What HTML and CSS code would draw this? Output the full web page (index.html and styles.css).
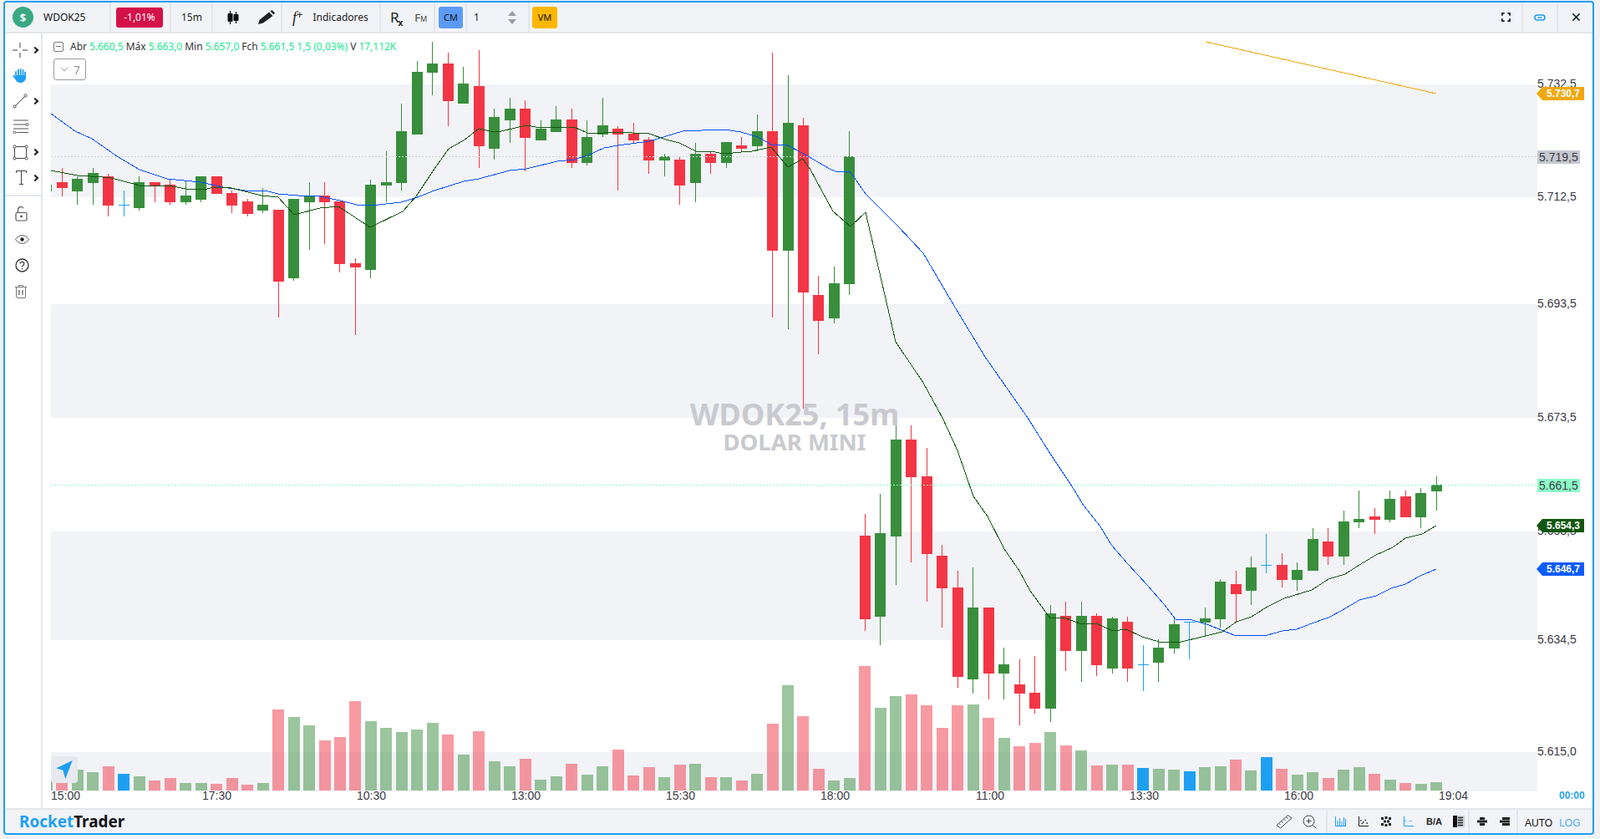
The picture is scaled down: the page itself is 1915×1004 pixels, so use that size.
FILE: index.html
```html
<!DOCTYPE html>
<html lang="pt-BR">
    <head>
        <meta charset="UTF-8" />
        <meta name="viewport" content="width=device-width, initial-scale=1.0" />
        <title>WDOK25, 15m - RocketTrader</title>
        <link rel="stylesheet" href="styles.css">
    </head>

    <body>
        <div class="app">
            <!-- top bar -->
            <header class="topbar">
                <div class="group group--symbol">
                    <span class="coin">$</span>
                    <span class="symbol">WDOK25</span>
                </div>
                <div class="group group--change"><span class="change">-1,01%</span></div>
                <div class="group group--period">15m</div>
                <div class="group group--draw">
                    <svg class="icon" width="14" height="16" viewBox="0 0 14 16">
                        <path d="M3.500 0v16M10.500 1v14" stroke="#111" stroke-width="1.200" />
                        <rect x="0.500" y="3" width="6" height="10" rx="1" fill="#111" />
                        <rect x="7.500" y="4" width="6" height="8" rx="1" fill="#111" />
                    </svg>
                    <svg class="icon" width="20" height="17" viewBox="0 0 20 17">
                        <path d="M0 17l1.500-5L13 2.500 17.500 7 6 15.500z" fill="#222" />
                        <path d="M14.500 1.500L16.500 0 20 3.500 18.500 5.500z" fill="#222" />
                    </svg>
                </div>
                <div class="group group--indicators">
                    <span class="fx">f<sup>+</sup></span>
                    <span>Indicadores</span>
                </div>
                <div class="group group--tools">
                    <span class="rx">R<sub>x</sub></span>
                    <span class="fm">F<small>M</small></span>
                </div>
                <div class="group group--cm"><span class="square square--blue">CM</span></div>
                <div class="group group--qty">
                    <span>1</span>
                    <span class="spinner"><i class="spinner__up"></i><i class="spinner__down"></i></span>
                </div>
                <div class="group group--vm"><span class="square square--yellow">VM</span></div>

                <div class="topbar__right">
                    <div class="group group--fullscreen">
                        <svg width="11" height="11" viewBox="0 0 12 12" fill="none" stroke="#14202c" stroke-width="2">
                            <path d="M1 4V1h3M8 1h3v3M11 8v3H8M4 11H1V8" />
                        </svg>
                    </div>
                    <div class="group group--icon">
                        <svg width="14" height="10" viewBox="0 0 14 10" fill="none" stroke="#1e9ff2" stroke-width="1.600">
                            <rect x="1" y="2" width="12" height="6" rx="3" />
                            <path d="M4.500 5h5" />
                        </svg>
                    </div>
                    <div class="group group--close">
                        <svg width="11" height="11" viewBox="0 0 12 12" stroke="#14202c" stroke-width="1.600">
                            <path d="M1.500 1.500l9 9M10.500 1.500l-9 9" />
                        </svg>
                    </div>
                </div>
            </header>

            <div class="main">
                <!-- drawing tools -->
                <nav class="toolbar">
                    <div class="tools">
                        <div class="tool tool--more">
                            <svg width="18" height="18" viewBox="0 0 18 18" stroke="#444">
                                <path d="M0 9h6M12 9h6M9 0v6M9 12v6" />
                            </svg>
                        </div>
                        <div class="tool">
                            <svg width="16" height="17" viewBox="0 0 16 17" fill="#1e9ff2">
                                <rect x="3.200" y="3" width="1.800" height="8" rx="0.900" />
                                <rect x="6" y="0.500" width="1.800" height="9" rx="0.900" />
                                <rect x="8.800" y="0" width="1.800" height="9" rx="0.900" />
                                <rect x="11.600" y="1" width="1.800" height="9" rx="0.900" />
                                <rect x="14.200" y="3.500" width="1.800" height="7" rx="0.900" />
                                <path d="M3.200 8h12.800v2.500c0 4-3 6.500-6.500 6.500-3.200 0-4.800-1.500-6-3.800L0 8.500c.8-.9 2-.6 2.600.2l.6 1z" />
                            </svg>
                        </div>
                        <div class="tool tool--more">
                            <svg width="18" height="18" viewBox="0 0 18 18" fill="#fff" stroke="#444">
                                <path d="M3 15L15 3" />
                                <circle cx="2.500" cy="15.500" r="1.600" />
                                <circle cx="15.500" cy="2.500" r="1.600" />
                            </svg>
                        </div>
                        <div class="tool">
                            <svg width="20" height="17" viewBox="0 0 20 17" fill="#fff" stroke="#555">
                                <path d="M1 1h18M1 6h15M1 11h18M5 15.500h14" stroke-width="1.200" />
                                <circle cx="17.500" cy="6" r="1.500" />
                                <circle cx="2.500" cy="15.500" r="1.500" />
                            </svg>
                        </div>
                        <div class="tool tool--more">
                            <svg width="19" height="19" viewBox="0 0 19 19" fill="#fff" stroke="#444">
                                <rect x="2.500" y="2.500" width="14" height="14" />
                                <circle cx="2.500" cy="2.500" r="1.600" />
                                <circle cx="16.500" cy="2.500" r="1.600" />
                                <circle cx="2.500" cy="16.500" r="1.600" />
                                <circle cx="16.500" cy="16.500" r="1.600" />
                            </svg>
                        </div>
                        <div class="tool tool--more tool--text">
                            <svg width="13" height="17" viewBox="0 0 13 17" fill="none" stroke="#444">
                                <path d="M0.500 3V0.500h12V3M6.500 0.500v16M4 16.500h5" />
                            </svg>
                        </div>
                    </div>
                    <div class="tools tools--lower">
                        <div class="tool">
                            <svg width="15" height="18" viewBox="0 0 15 18" fill="none" stroke="#555" stroke-width="1.200">
                                <rect x="1" y="7.500" width="13" height="9.500" rx="1.500" />
                                <path d="M3.500 7.500V4a3.500 3.500 0 0 1 6.500-1.800" />
                                <circle cx="7.500" cy="12" r="0.800" fill="#333" />
                            </svg>
                        </div>
                        <div class="tool">
                            <svg width="17" height="11" viewBox="0 0 17 11" fill="none" stroke="#555">
                                <path d="M0.500 5.500C3 2 5.500 0.700 8.500 0.700S14 2 16.500 5.500C14 9 11.500 10.300 8.500 10.300S3 9 0.500 5.500z" />
                                <circle cx="8.500" cy="5.500" r="2.200" fill="#222" stroke="none" />
                            </svg>
                        </div>
                        <div class="tool">
                            <svg width="17" height="17" viewBox="0 0 17 17" fill="none" stroke="#333" stroke-width="1.300">
                                <circle cx="8.500" cy="8.500" r="7.500" />
                                <path d="M6.200 6.500a2.300 2.300 0 1 1 3.500 2c-.9.500-1.200 1-1.200 2" />
                                <path d="M8.500 12v1.300" />
                            </svg>
                        </div>
                        <div class="tool">
                            <svg width="14" height="16" viewBox="0 0 14 16" fill="none" stroke="#777">
                                <path d="M0 2.500h14M4.500 2.500V0.500h5v2M1.500 2.500V14a1.500 1.500 0 0 0 1.500 1.500h8a1.500 1.500 0 0 0 1.500-1.500V2.500" />
                                <path d="M5 6v6M9 6v6" stroke-width="1.500" />
                            </svg>
                        </div>
                    </div>
                </nav>

                <!-- chart, filled in by chart.js -->
                <section class="chart" id="chart">
                    <div class="legend">
                        <div class="legend__row">
                            <span class="legend__toggle"></span>
                            <span>Abr <b>5.660,5</b> Máx <b>5.663,0</b> Min <b>5.657,0</b> Fch <b>5.661,5 1,5 (0,03%)</b> V <b>17,112K</b></span>
                        </div>
                        <div class="legend__collapsed">
                            <svg width="10" height="6" viewBox="0 0 10 6" fill="none" stroke="#999"><path d="M1 1l4 4 4-4" /></svg>
                            <span>7</span>
                        </div>
                    </div>
                    <div class="nav-button">
                        <svg width="32" height="32" viewBox="0 0 32 32">
                            <path d="M25.700 5L6.300 14.300l8 2.400L17.300 27z" fill="#1e9ff2" />
                        </svg>
                    </div>
                </section>
            </div>

            <!-- bottom bar -->
            <footer class="bottombar">
                <div class="brand"><span class="brand__rocket">Rocket</span>Trader</div>
                <div class="bottombar__right">
                    <div class="bgroup bgroup--measure">
                        <svg width="20" height="18" viewBox="0 0 20 18" fill="none" stroke="#444">
                            <path d="M1 13.500L14.500 1.500l4.500 3.500L5.500 17z" />
                            <path d="M4 11.500l1.500 1.500M7 9l1.500 1.500M10 6.500l1.500 1.500M13 4l1.500 1.500" />
                        </svg>
                        <svg width="17" height="17" viewBox="0 0 17 17" fill="none" stroke="#444">
                            <circle cx="7.500" cy="7.500" r="6.500" />
                            <path d="M4.500 7.500h6M7.500 4.500v6M12.500 12.500l4 4" />
                        </svg>
                    </div>
                    <div class="bgroup bgroup--view">
                        <svg width="13" height="12" viewBox="0 0 13 12" stroke="#1e9ff2">
                            <path d="M0.500 0v11.500H13M3 5v6M5.500 2v9M8 6v5M10.500 1v10M12.500 3v8" fill="none" />
                        </svg>
                        <svg width="12" height="12" viewBox="0 0 12 12" stroke="#222">
                            <path d="M0.500 0v11.500H12" fill="none" />
                            <path d="M2 5h1.500M5 7h1.500M7.500 4.500H9M9.500 8H11M3.500 8.500H5" stroke-width="1.500" />
                        </svg>
                        <svg width="12" height="12" viewBox="0 0 12 12" fill="#222">
                            <rect x="0" y="1" width="3" height="3" /><rect x="4.500" y="0" width="3" height="3" /><rect x="9" y="1" width="3" height="3" />
                            <rect x="3" y="4.500" width="3" height="3" /><rect x="7" y="4.500" width="3" height="3" />
                            <rect x="0" y="8" width="3" height="3" /><rect x="4.500" y="9" width="3" height="3" /><rect x="9" y="8" width="3" height="3" />
                        </svg>
                        <svg width="12" height="12" viewBox="0 0 12 12" fill="none" stroke="#1e9ff2">
                            <path d="M0.500 0v11.500H12" /><path d="M0.500 5.500H4M6 5.500h4" stroke-opacity="0.600" />
                        </svg>
                        <span class="ba">B/A</span>
                        <span class="book">
                            <svg width="14" height="14" viewBox="0 0 14 14">
                                <rect x="0" y="0" width="14" height="14" fill="#cfd2d8" />
                                <rect x="0" y="0" width="5" height="14" fill="#111" />
                                <path d="M6 2.500h6M6 5.500h6M6 8.500h6M6 11.500h6" stroke="#222" stroke-width="1.300" />
                            </svg>
                        </span>
                    </div>
                    <div class="bgroup bgroup--layout">
                        <svg width="12" height="10" viewBox="0 0 12 10" fill="#222">
                            <rect x="3" y="0" width="6" height="3" /><rect x="0" y="3.500" width="12" height="3" /><rect x="3" y="7" width="6" height="3" />
                        </svg>
                        <svg width="12" height="10" viewBox="0 0 12 10" fill="#222">
                            <rect x="3" y="0" width="9" height="3" /><rect x="0" y="3.500" width="12" height="3" /><rect x="3" y="7" width="9" height="3" />
                        </svg>
                    </div>
                    <div class="bgroup bgroup--scale">
                        <span>AUTO</span>
                        <span class="scale-log">LOG</span>
                    </div>
                </div>
            </footer>
        </div>

        <script src="chart.js"></script>
    </body>
</html>
```

FILE: styles.css
```css
html {
    box-sizing: border-box;
    font-size: 16px;
}

*,
*:before,
*:after {
    box-sizing: inherit;
}

body {
    margin: 0;
    padding: 1px 0 0 4px;
    height: 1004px;
    overflow: hidden;
    background: #f1f1f1;
    font-family: "Noto Sans", sans-serif;
    color: #222;
}

.app {
    display: flex;
    flex-direction: column;
    width: 1904px;
    height: 998px;
    border: 2px solid #1e9ff2;
    border-radius: 4px;
    background: #f1f3f7;
    overflow: hidden;
}

/* top bar */
.topbar {
    display: flex;
    flex: none;
    height: 37px;
    border-bottom: 2px solid #e3e6ea;
    font-size: 12px;
}

.group {
    display: flex;
    flex: none;
    align-items: center;
    height: 35px;
    border-right: 2px solid #e3e6ea;
}

.group--symbol { width: 127px; padding-left: 9px; }
.group--change { width: 72px; padding-left: 6px; }
.group--period { width: 50px; padding-left: 12px; }
.group--draw { width: 83px; padding-left: 17px; gap: 23px; }
.group--indicators { width: 118px; padding-left: 12px; gap: 12px; }
.group--tools { width: 65px; padding-left: 11px; gap: 14px; }
.group--cm { width: 38px; padding-left: 4px; }
.group--qty { width: 75px; padding-left: 8px; gap: 34px; }
.group--vm { width: 40px; padding-left: 3px; border-right: 0; }

.topbar__right {
    display: flex;
    margin-left: auto;
}

.group--fullscreen { width: 40px; padding-left: 14px; }
.group--icon { width: 42px; justify-content: center; }
.group--close { width: 41px; padding-left: 16px; border-right: 0; }

.coin {
    display: flex;
    align-items: center;
    justify-content: center;
    width: 25px;
    height: 25px;
    border-radius: 50%;
    background: #3aa981;
    color: #fff;
    font-size: 13px;
    font-weight: 700;
}

.symbol {
    margin-left: 12px;
    color: #111;
}

.change {
    width: 56px;
    border-radius: 3px;
    background: #d41149;
    color: #fff;
    line-height: 24px;
    text-align: center;
}

.fx {
    font-family: "Liberation Serif", serif;
    font-size: 18px;
    font-style: italic;
    line-height: 18px;
}

.fx sup {
    font-family: "Noto Sans", sans-serif;
    font-size: 13px;
    font-style: normal;
    line-height: 0;
    vertical-align: 5px;
}

.rx {
    font-size: 17px;
    line-height: 18px;
}

.rx sub {
    margin-left: -1px;
    font-size: 10px;
    font-weight: 700;
    line-height: 0;
}

.fm {
    color: #444;
    font-size: 13px;
}

.fm small {
    font-size: 9px;
}

.square {
    display: flex;
    align-items: center;
    justify-content: center;
    width: 29px;
    height: 26px;
    border-radius: 3px;
    font-size: 11px;
    color: #111;
}

.square--blue { background: #5b9bf8; }
.square--yellow { width: 30px; background: #fdb700; }

.spinner {
    display: flex;
    flex-direction: column;
    gap: 4px;
}

.spinner i {
    display: block;
    width: 0;
    height: 0;
    border-left: 5.5px solid transparent;
    border-right: 5.5px solid transparent;
}

.spinner__up { border-bottom: 6px solid #9b9ba5; }
.spinner__down { border-top: 6px solid #9b9ba5; }

/* middle */
.main {
    display: flex;
    flex: 1;
    min-height: 0;
}

.toolbar {
    flex: none;
    width: 45px;
    border-right: 2px solid #e3e6ea;
    background: #fff;
}

.tools {
    padding: 5px 0;
    border-bottom: 2px solid #e3e6ea;
}

.tools--lower {
    padding-top: 5px;
    border-bottom: 0;
}

.tool {
    position: relative;
    display: flex;
    align-items: center;
    height: 30.5px;
    padding-left: 9px;
}

.tools--lower .tool {
    height: 31px;
    padding-left: 12px;
}

.tool--text {
    padding-left: 13px;
}

.tool--more:after {
    content: "";
    position: absolute;
    left: 33px;
    top: 12px;
    width: 6px;
    height: 6px;
    border-top: 2px solid #222;
    border-right: 2px solid #222;
    transform: rotate(45deg);
}

.chart {
    position: relative;
    flex: 1;
    min-width: 0;
    background: #fff;
}

.chart svg.chart__canvas {
    display: block;
}

.legend {
    position: absolute;
    left: 13px;
    top: 8px;
    font-size: 12px;
    letter-spacing: -0.03px;
    color: #333;
}

.legend__row {
    display: flex;
    align-items: center;
    gap: 8px;
    line-height: 16px;
}

.legend b {
    font-weight: 400;
    color: #1ce88f;
}

.legend__toggle {
    position: relative;
    width: 12px;
    height: 12px;
    border: 1px solid #777;
    border-radius: 2px;
}

.legend__toggle:after {
    content: "";
    position: absolute;
    left: 2px;
    top: 4px;
    width: 6px;
    height: 1px;
    background: #777;
}

.legend__collapsed {
    display: flex;
    align-items: center;
    gap: 6px;
    width: 39px;
    height: 26px;
    margin-top: 6px;
    padding-left: 7px;
    border: 1px solid #9a9aa5;
    border-radius: 3px;
    color: #999;
    font-size: 14px;
}

.nav-button {
    position: absolute;
    left: 10px;
    top: 865px;
    width: 32px;
    height: 32px;
    border-radius: 4px;
    background: #e7e9ee;
}

.nav-button svg {
    display: block;
}

/* chart pieces, the svg is built in chart.js */
.band { fill: #f2f3f7; }
.bar--g { fill: #388e3c; fill-opacity: 0.5; }
.bar--r { fill: #f23645; fill-opacity: 0.5; }
.bar--b { fill: #1e9ff2; }
.candle--g { fill: #388e3c; }
.candle--r { fill: #f23645; }
.candle--b { fill: #1e9ff2; }

.ma {
    fill: none;
    stroke-width: 1;
    shape-rendering: crispEdges;
}

.ma--green { stroke: #11570f; }
.ma--blue { stroke: #0050ff; }
.ma--orange { stroke: #f0a70f; }

.hline {
    stroke-width: 1;
    stroke-dasharray: 2 2;
    shape-rendering: crispEdges;
}

.hline--grey { stroke: #d0d2d8; }
.hline--green { stroke: #8effc8; }

.axis-text {
    font-family: "Liberation Sans", sans-serif;
    font-size: 14px;
    fill: #3a3a45;
}

.axis-now {
    font-family: "Liberation Sans", sans-serif;
    font-size: 12px;
    font-weight: 700;
    fill: #2aa5f5;
}

.tag-text {
    font-family: "Liberation Sans", sans-serif;
    font-size: 12px;
    font-weight: 700;
    fill: #fff;
}

.watermark {
    font-family: "Noto Sans", sans-serif;
    font-weight: 700;
    fill: #c9cacf;
    text-anchor: middle;
}

.watermark--big { font-size: 36px; }
.watermark--small { font-size: 27.5px; }

/* bottom bar */
.bottombar {
    display: flex;
    flex: none;
    align-items: center;
    height: 30px;
    border-top: 2px solid #e3e6ea;
}

.brand {
    margin-left: 17px;
    font-size: 18.9px;
    font-weight: 700;
    color: #14161c;
}

.brand__rocket { color: #1e9ff2; }

.bottombar__right {
    display: flex;
    margin-left: auto;
    height: 100%;
}

.bgroup {
    display: flex;
    align-items: center;
    height: 100%;
    border-left: 2px solid #e3e6ea;
}

.bgroup--measure {
    border-left: 0;
    gap: 12px;
    padding-right: 11px;
}

.bgroup--view {
    gap: 15px;
    width: 170px;
    padding-left: 9px;
}

.bgroup--view .ba {
    margin-right: -2px;
}

.bgroup--layout {
    gap: 15px;
    width: 58px;
    padding-left: 9px;
}

.bgroup--scale {
    gap: 8px;
    width: 91px;
    padding: 3px 0 0 8px;
    font-family: "Liberation Sans", sans-serif;
    font-size: 12px;
    color: #111;
}

.ba {
    font-family: "Liberation Sans", sans-serif;
    font-size: 11px;
    font-weight: 700;
}

.book {
    display: flex;
}

.scale-log { color: #4da9f5; }
```

FILE: chart.js
```js
// candle: [colour, wick top, body top, body bottom, wick bottom], y in page pixels
const candles = [
    ["g", 221, 221, 229, 229], ["r", 201, 218, 225, 235], ["g", 211, 214, 229, 245], ["g", 201, 207, 219, 245],
    ["r", 208, 211, 246, 259], ["b", 228, 245, 246, 259], ["g", 211, 218, 249, 252], ["r", 218, 218, 222, 242],
    ["r", 215, 221, 242, 245], ["g", 217, 234, 242, 245], ["g", 211, 211, 239, 242], ["r", 211, 211, 232, 232],
    ["r", 228, 231, 246, 255], ["r", 238, 241, 256, 259], ["g", 225, 245, 252, 255], ["r", 251, 251, 337, 380],
    ["g", 238, 238, 333, 336], ["g", 218, 234, 242, 299], ["r", 218, 234, 242, 292], ["r", 241, 241, 316, 326],
    ["r", 309, 315, 320, 401], ["g", 215, 221, 323, 333], ["g", 181, 218, 222, 242], ["g", 124, 157, 219, 228],
    ["g", 73, 86, 161, 161], ["g", 50, 76, 87, 114], ["r", 63, 76, 121, 151], ["g", 80, 100, 124, 124],
    ["r", 60, 103, 175, 201], ["g", 130, 140, 178, 191], ["g", 117, 130, 144, 171], ["r", 120, 130, 165, 205],
    ["g", 144, 154, 168, 168], ["g", 127, 143, 158, 158], ["r", 130, 143, 195, 201], ["g", 144, 164, 195, 198],
    ["g", 117, 150, 161, 164], ["r", 151, 154, 161, 228], ["r", 147, 160, 168, 171], ["r", 164, 167, 192, 208],
    ["g", 184, 187, 192, 211], ["r", 188, 191, 222, 245], ["g", 171, 184, 219, 242], ["r", 182, 184, 195, 208],
    ["g", 170, 170, 195, 201], ["r", 164, 174, 178, 181], ["g", 137, 157, 175, 181], ["r", 63, 157, 300, 380],
    ["g", 90, 147, 300, 394], ["r", 141, 150, 350, 489], ["r", 330, 353, 384, 424], ["g", 319, 339, 381, 387],
    ["g", 157, 187, 340, 353], ["r", 615, 641, 741, 755], ["g", 591, 638, 738, 772], ["g", 509, 526, 642, 700],
    ["r", 509, 526, 571, 673], ["r", 536, 570, 663, 720], ["r", 652, 665, 704, 751], ["r", 683, 703, 810, 823],
    ["g", 679, 727, 813, 830], ["r", 727, 727, 806, 837], ["g", 775, 795, 806, 837], ["r", 789, 819, 830, 868],
    ["r", 785, 829, 848, 854], ["g", 724, 734, 848, 864], ["r", 720, 737, 779, 803], ["g", 720, 737, 779, 816],
    ["r", 734, 737, 796, 809], ["g", 738, 740, 800, 806], ["r", 738, 744, 800, 816], ["b", 772, 795, 796, 827],
    ["g", 765, 775, 793, 816], ["g", 738, 747, 776, 782], ["b", 744, 744, 745, 789], ["g", 727, 740, 745, 761],
    ["g", 693, 696, 741, 751], ["r", 683, 699, 711, 744], ["g", 666, 679, 707, 724], ["b", 639, 676, 677, 686],
    ["r", 662, 676, 694, 703], ["g", 673, 682, 694, 707], ["g", 632, 645, 683, 683], ["r", 632, 648, 666, 676],
    ["g", 611, 624, 666, 676], ["g", 587, 621, 625, 632], ["r", 608, 618, 622, 639], ["g", 587, 597, 622, 625],
    ["r", 587, 594, 619, 619], ["g", 584, 590, 619, 632], ["g", 570, 580, 588, 611]
];

// volume: [colour, bar top]
const volumes = [
    ["g", 931], ["r", 925], ["g", 921], ["g", 924], ["r", 917], ["b", 926], ["g", 929], ["r", 934], ["r", 931],
    ["g", 937], ["g", 937], ["r", 938], ["r", 931], ["r", 939], ["g", 937], ["r", 849], ["g", 858], ["g", 868],
    ["r", 886], ["r", 882], ["r", 839], ["g", 863], ["g", 871], ["g", 876], ["g", 873], ["g", 865], ["r", 879],
    ["g", 903], ["r", 875], ["g", 911], ["g", 917], ["r", 908], ["g", 933], ["g", 929], ["r", 914], ["g", 927],
    ["g", 917], ["r", 897], ["r", 928], ["r", 918], ["g", 930], ["r", 915], ["g", 914], ["r", 930], ["g", 930],
    ["r", 934], ["g", 926], ["r", 866], ["g", 820], ["r", 857], ["r", 920], ["g", 934], ["g", 931], ["r", 797],
    ["g", 847], ["g", 833], ["r", 831], ["r", 844], ["r", 871], ["r", 844], ["g", 843], ["r", 859], ["g", 883],
    ["r", 893], ["r", 889], ["g", 876], ["r", 892], ["g", 898], ["r", 916], ["g", 915], ["r", 915], ["b", 919],
    ["g", 920], ["g", 921], ["b", 923], ["g", 918], ["g", 917], ["r", 909], ["g", 922], ["b", 906], ["r", 920],
    ["g", 927], ["g", 924], ["r", 931], ["g", 921], ["g", 918], ["r", 926], ["g", 933], ["r", 937], ["g", 938],
    ["g", 936]
];

const maBlue = "61,136 90,157 110,166 140,187 167,203 200,214 240,218 267,224 293,228 317,228 333,232 357,234 383,235 407,240 427,245 453,245 480,242 497,237 520,228 555,217 573,214 610,204 630,202 667,193 687,191 703,186 723,177 740,174 777,169 797,163 817,157 840,156 867,155 887,158 907,164 923,173 943,174 960,183 993,202 1000,205 1017,205 1020,209 1036,232 1075,271 1105,303 1142,366 1179,427 1230,500 1257,543 1283,582 1297,605 1317,630 1330,652 1350,675 1373,700 1393,723 1407,741 1427,742 1447,748 1477,760 1483,761 1517,760 1535,755 1552,753 1570,746 1590,739 1607,730 1627,718 1647,713 1665,704 1682,699 1700,689 1719,681";
const maGreen = "61,204 93,210 123,212 133,213 160,220 167,222 200,222 223,226 243,227 257,224 277,225 293,229 313,234 333,236 352,257 383,249 405,247 443,272 482,253 498,235 520,202 537,178 555,168 573,154 587,157 600,157 630,150 647,153 680,152 687,152 703,159 710,160 737,158 777,160 797,167 813,171 833,181 850,181 867,184 887,182 900,181 923,176 943,200 961,190 970,203 997,253 1018,271 1036,254 1072,409 1105,458 1128,500 1146,539 1165,594 1182,618 1202,657 1220,683 1233,707 1257,740 1273,739 1295,747 1312,746 1332,755 1348,753 1367,762 1387,768 1410,769 1443,761 1463,756 1480,744 1498,738 1517,726 1537,716 1570,706 1590,693 1610,687 1627,676 1647,664 1667,655 1682,644 1702,639 1719,629";

const bands = [[101, 236], [364, 500], [636, 766], [900, 947]];

const times = [
    ["15:00", 61], ["17:30", 242], ["10:30", 427], ["13:00", 612], ["15:30", 797],
    ["18:00", 982], ["11:00", 1168], ["13:30", 1352], ["16:00", 1537], ["19:04", 1722]
];

const prices = [
    ["5.732,5", 105], ["5.712,5", 240], ["5.693,5", 368], ["5.673,5", 504],
    ["5.653,5", 640], ["5.634,5", 770], ["5.615,0", 904]
];

// price marks with a box: [text, top, colour]
const priceBoxes = [["5.719,5", 180, "#c5c8d0"], ["5.661,5", 573, "#8effc8"]];

// arrow tags on the axis: [text, top, colour]
const priceTags = [["5.730,7", 104, "#f0a70f"], ["5.654,3", 621, "#11570f"], ["5.646,7", 673, "#0b5cff"]];

const SVG_NS = "http://www.w3.org/2000/svg";
const STEP = 18.483;

function el(name, attrs, parent, text) {
    const node = document.createElementNS(SVG_NS, name);
    Object.keys(attrs).forEach((key) => node.setAttribute(key, attrs[key]));
    if (text) {
        node.textContent = text;
    }
    parent.appendChild(node);
    return node;
}

function drawChart() {
    const chart = document.getElementById("chart");
    // the viewBox keeps page coordinates, which is what the data above uses
    const svg = document.createElementNS(SVG_NS, "svg");
    svg.setAttribute("class", "chart__canvas");
    svg.setAttribute("width", 1855);
    svg.setAttribute("height", 927);
    svg.setAttribute("viewBox", "51 40 1855 927");
    chart.insertBefore(svg, chart.firstChild);

    const clip = el("clipPath", { id: "plot" }, el("defs", {}, svg));
    el("rect", { x: 61, y: 40, width: 1779, height: 927 }, clip);

    bands.forEach(([top, bottom]) => {
        el("rect", { class: "band", x: 61, y: top, width: 1779, height: bottom - top }, svg);
    });

    el("text", { class: "watermark watermark--big", x: 951, y: 509 }, svg, "WDOK25, 15m");
    el("text", { class: "watermark watermark--small", x: 951, y: 539 }, svg, "DOLAR MINI");

    const plot = el("g", { "clip-path": "url(#plot)", "shape-rendering": "crispEdges" }, svg);

    volumes.forEach(([colour, top], i) => {
        const x = Math.round(74.3 + STEP * (i - 1) - 7);
        el("rect", { class: "bar--" + colour, x: x, y: top, width: 14, height: 946 - top }, plot);
    });

    candles.forEach(([colour, wickTop, bodyTop, bodyBottom, wickBottom], i) => {
        const x = Math.round(74.3 + STEP * (i - 1) - 6.5);
        el("rect", { class: "candle--" + colour, x: x + 6, y: wickTop, width: 1, height: wickBottom - wickTop }, plot);
        el("rect", { class: "candle--" + colour, x: x, y: bodyTop, width: 13, height: bodyBottom - bodyTop }, plot);
    });

    el("line", { class: "hline hline--grey", x1: 61, x2: 1840, y1: 187.5, y2: 187.5 }, svg);
    el("line", { class: "hline hline--green", x1: 61, x2: 1840, y1: 580.5, y2: 580.5 }, svg);

    el("polyline", { class: "ma ma--blue", points: maBlue }, svg);
    el("polyline", { class: "ma ma--green", points: maGreen }, svg);
    el("polyline", { class: "ma ma--orange", points: "1443,50 1719,112" }, svg);

    times.forEach(([label, x]) => {
        el("text", { class: "axis-text", x: x, y: 957 }, svg, label);
    });
    el("text", { class: "axis-now", x: 1866, y: 956 }, svg, "00:00");

    prices.forEach(([label, y]) => {
        el("text", { class: "axis-text", x: 1840, y: y }, svg, label);
    });

    priceBoxes.forEach(([label, top, colour]) => {
        el("rect", { x: 1840, y: top, width: 51, height: 16, fill: colour }, svg);
        el("text", { class: "axis-text", x: 1842, y: top + 13 }, svg, label);
    });

    priceTags.forEach(([label, top, colour]) => {
        el("path", { d: `M1839 ${top + 8}l7-8h50v16h-50z`, fill: colour }, svg);
        el("text", { class: "tag-text", x: 1851, y: top + 12 }, svg, label);
    });
}

drawChart();
```
